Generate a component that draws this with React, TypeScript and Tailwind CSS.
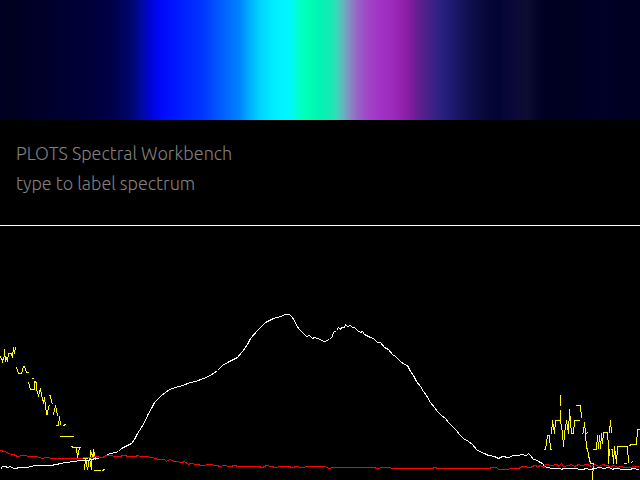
const BASELINE =
  "0,469 2,466 5,466 7,467 10,466 13,468 16,468 18,467 27,467 30,466 36,465 42,465 50,465 56,464 60,463 66,462 73,461 80,460 87,460 96,458 102,457 105,456 107,454 110,453 115,452 118,451 121,448 127,445 131,443 134,439 137,433 141,427 144,422 147,415 151,408 154,402 161,395 169,389 175,387 182,385 190,382 195,381 203,378 210,375 217,370 222,365 229,361 237,357 242,351 247,344 250,338 257,330 265,322 273,318 280,316 285,314 289,314 292,317 298,328 301,331 304,334 306,336 309,335 312,338 314,337 317,338 324,341 329,339 332,336 333,332 336,330 338,327 340,329 341,327 344,327 345,324 347,326 350,325 352,327 354,327 357,330 360,332 362,331 364,334 370,337 373,338 377,342 380,342 384,347 388,349 392,354 395,356 400,361 404,364 407,365 410,371 413,375 416,381 420,386 423,391 426,395 430,402 434,407 437,411 441,415 445,418 448,422 453,427 456,430 459,434 463,438 468,441 472,444 476,449 479,451 484,453 488,455 494,456 498,458 502,456 508,457 513,455 518,455 521,454 526,455 528,453 530,455 533,459 535,459 538,461 542,463 544,466 547,467 552,468 560,468 561,469 563,468 577,468 578,469 583,469 585,468 590,469 594,468 600,467 603,468 609,467 612,469 614,468 625,469 630,469 632,468 639,469";

const REFERENCE =
  "0,450 4,451 7,452 10,454 13,454 17,456 23,455 30,456 36,456 42,458 45,457 53,458 80,458 85,457 93,457 95,456 102,457 106,455 118,456 124,455 128,456 135,456 137,455 140,456 144,456 152,457 158,459 164,459 166,461 169,459 174,461 182,462 184,461 188,464 190,463 196,464 202,465 209,464 216,465 220,466 223,465 230,466 234,465 238,466 258,466 262,467 266,465 271,466 275,467 280,466 288,466 292,467 296,466 301,467 309,466 324,466 329,468 332,467 373,467 377,468 383,467 390,467 391,468 432,468 434,467 438,468 488,468 492,467 496,467 498,469 505,469 512,468 518,468 522,466 530,467 534,465 538,466 540,465 543,467 545,464 551,465 557,464 558,466 561,463 563,466 568,465 571,464 574,466 578,464 581,465 587,464 591,466 594,464 599,466 602,464 606,465 610,466 614,465 617,467 620,466 625,467 639,466";

const RATIO = [
  "M0,356 L2,361 L3,357 L4,356 L4,349 L5,361 L6,357 L7,361 L8,353 L11,353 L12,357 L13,347 L14,353 L15,347",
  "M16,367 L18,373 L21,373 L23,366 L24,366 L26,372 L28,372",
  "M32,378 H33",
  "M28,382 L30,389 H34 L34,381 L36,382 L36,389 L38,395 L40,388 L41,394 L43,403 L44,397 L46,414 H47 L48,406 L49,405",
  "M49,395 H50 L51,402 L52,403",
  "M53,414 L55,405 L57,415",
  "M56,425 H58 L59,416 L60,424",
  "M63,425 L65,424",
  "M60,436 H73",
  "M71,446 L73,447 H80",
  "M76,447 L77,457 L79,447",
  "M80,458 H87",
  "M84,469 L85,458 L87,469 L89,458 L91,469 L90,450 L93,458 L93,449 L95,459",
  "M94,470 H100",
  "M102,470 L104,469",
  "M544,449 H545 L547,435 H549 L550,449 H551",
  "M551,433 L552,420 L554,433 L555,420 H560 L560,410",
  "M560,405 V395",
  "M560,420 L562,433 L563,446 L564,433 L566,420 L568,433 L569,409 L571,433 H573 L574,420 H579",
  "M576,405 H580 L581,417",
  "M582,433 L583,432 L584,422 L585,433 L586,448 H587 L588,455 L590,463 H593 L592,479",
  "M586,433 L587,432",
  "M593,449 H596 L597,435 L598,448 L599,435 L600,448 L601,433 L602,443 L603,432 H607 L608,446 L608,463 L609,449",
  "M609,432 L610,420 L611,432",
  "M611,449 H612 L613,463 L614,446 L616,463 L617,446 H627 L628,462",
  "M624,463 H626",
  "M631,462 L632,461",
  "M629,445 L631,444 H636 L637,429 H640",
];

function Spectrum() {
  return (
    <div
      role="img"
      aria-label="Captured spectrum"
      className="h-[120px] w-full bg-[linear-gradient(to_right,#000025_0%,#00001e_2%,#000028_5%,#00002e_9%,#00003a_14%,#000045_17%,#000458_19%,#000775_20.8%,#0008a8_22.3%,#0004d8_23.5%,#0008f8_25%,#0014ff_27%,#0034ff_31.5%,#005cff_34.4%,#0084ff_37.5%,#00b0ff_39%,#00d4ff_40.6%,#00ecff_42.6%,#00f8ff_45.3%,#00ffcc_46.6%,#00ffb4_48%,#00f4b4_50%,#18e8b4_51.6%,#34dcb8_52.5%,#66b4bc_53.6%,#8888c0_54.7%,#9860c8_56%,#a048c8_57.2%,#a034c4_59.4%,#9c28b8_61.7%,#8c20a8_63.3%,#7c1c9c_64.4%,#5c208c_65.6%,#442088_67.2%,#2c2080_68.8%,#201c74_70.3%,#141458_72.3%,#0c0c48_74.2%,#080838_75.8%,#040434_78%,#0c0838_80.5%,#0c0c30_82.5%,#04042a_84%,#000022_85.2%,#000020_89%,#000028_94%,#000020_100%)]"
    />
  );
}

function Graph() {
  return (
    <svg
      viewBox="0 226 640 254"
      className="block h-auto w-full"
      fill="none"
      strokeWidth="1"
      shapeRendering="crispEdges"
      role="img"
      aria-label="Intensity graph"
    >
      <g transform="translate(0.5 0.5)">
        <path d={RATIO.join(" ")} stroke="#ffff00" strokeLinecap="square" />
        <polyline points={BASELINE} stroke="#ffffff" />
        <polyline points={REFERENCE} stroke="#ff0000" />
      </g>
    </svg>
  );
}

export default function App() {
  return (
    <main className="min-h-screen bg-black">
      <Spectrum />
      <header className="border-b border-white px-4 pt-[18px] pb-[27px] font-[Ubuntu,Lato,sans-serif] text-[18px] leading-[30px] font-light text-[#808080]">
        <h1>PLOTS Spectral Workbench</h1>
        <p>type to label spectrum</p>
      </header>
      <Graph />
    </main>
  );
}
